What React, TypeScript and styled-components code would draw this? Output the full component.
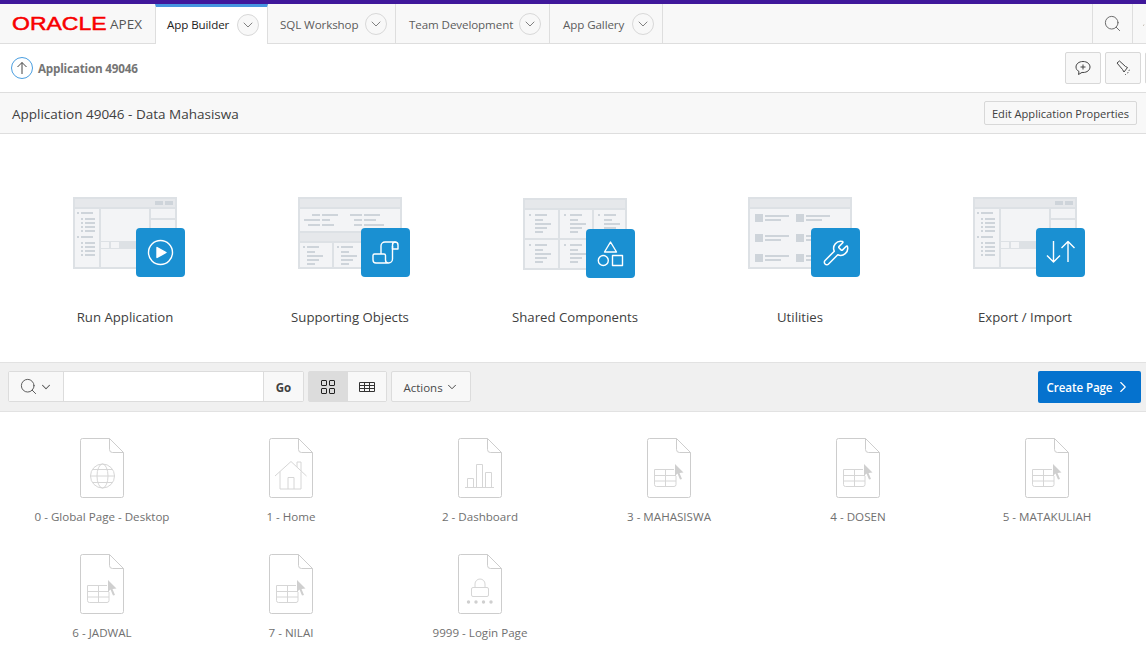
import React from "react";
import styled, { createGlobalStyle } from "styled-components";
import { ChevronDown, ChevronRight, Search, Wrench } from "lucide-react";

const GlobalStyle = createGlobalStyle`
  html, body {
    margin: 0;
    padding: 0;
    background: #fff;
    overflow: hidden;
  }
  * { box-sizing: border-box; }
`;

const Page = styled.div`
  width: 1146px;
  height: 654px;
  overflow: hidden;
  font-family: "Open Sans", "Noto Sans", sans-serif;
  color: #404040;
  border-top: 4px solid #40189b;
`;

const NavBar = styled.nav`
  height: 40px;
  display: flex;
  background: #f8f8f8;
  border-bottom: 1px solid #dedede;
`;

const Brand = styled.div`
  width: 155px;
  flex: none;
  display: flex;
  align-items: center;
  padding-left: 12px;
`;

const OracleMark = styled.span`
  display: inline-block;
  width: 94px;
  font-family: "Liberation Sans", sans-serif;
  font-size: 19px;
  line-height: 19px;
  font-weight: 400;
  color: #f80000;
  -webkit-text-stroke: 0.5px #f80000;
  transform: scaleX(1.21);
  transform-origin: left center;
`;

const ApexMark = styled.span`
  font-family: "Open Sans", sans-serif;
  font-size: 13.5px;
  margin-left: 4px;
  color: #555;
`;

const NavTab = styled.div<{ $active?: boolean; $width: number; $inset: number }>`
  width: ${p => p.$width}px;
  flex: none;
  height: ${p => (p.$active ? "40px" : "39px")};
  display: flex;
  align-items: center;
  justify-content: space-between;
  padding: ${p => (p.$active ? "0 8px 2px" : "1px 8px 0")};
  padding-left: ${p => p.$inset}px;
  font-size: 11.6px;
  letter-spacing: -0.1px;
  border-right: 1px solid #dedede;
  color: ${p => (p.$active ? "#222" : "#5c5c5c")};
  background: ${p => (p.$active ? "#fff" : "transparent")};
  border-left: ${p => (p.$active ? "1px solid #dedede" : "none")};
  border-top: ${p => (p.$active ? "3px solid #4696e0" : "none")};
`;

const TabCaret = styled.span`
  width: 22px;
  height: 22px;
  border-radius: 50%;
  border: 1px solid #d8d8d8;
  display: flex;
  align-items: center;
  justify-content: center;
  color: #777;
  background: #f8f8f8;
`;

const NavSpacer = styled.div`
  flex: 1;
`;

const NavTool = styled.div<{ $width: number }>`
  width: ${p => p.$width}px;
  flex: none;
  height: 39px;
  display: flex;
  align-items: center;
  padding-left: 10px;
  border-left: 1px solid #dedede;
  color: #666;
`;

const CrumbBar = styled.div`
  height: 49px;
  display: flex;
  align-items: center;
  padding: 0 0 0 11px;
  background: #fff;
  border-bottom: 1px solid #dedede;
`;

const UpButton = styled.span`
  width: 22px;
  height: 22px;
  flex: none;
  border-radius: 50%;
  border: 1px solid #4a9ee0;
  display: flex;
  align-items: center;
  justify-content: center;
  margin-right: 5px;
  color: #444;
`;

const CrumbText = styled.span`
  flex: 1;
  font-size: 11.7px;
  font-weight: 700;
  letter-spacing: -0.2px;
  color: #757575;
`;

const CrumbTool = styled.button`
  width: 36px;
  height: 32px;
  flex: none;
  margin-left: 4px;
  padding: 0;
  display: flex;
  align-items: center;
  justify-content: center;
  background: #f8f8f8;
  border: 1px solid #d8d8d8;
  border-radius: 2px;
  color: #444;
`;

const CrumbTools = styled.div`
  display: flex;
  margin-right: -35px;
`;

const TitleBar = styled.div`
  height: 41px;
  display: flex;
  align-items: center;
  justify-content: space-between;
  padding: 0 9px 0 12px;
  background: #f8f8f8;
  border-bottom: 1px solid #dedede;
`;

const PageTitle = styled.h1`
  margin: 1px 0 0;
  font-size: 13.5px;
  font-weight: 400;
  color: #404040;
`;

const PlainButton = styled.button`
  height: 24px;
  width: 153px;
  padding: 0;
  font-family: inherit;
  font-size: 11.1px;
  color: #404040;
  background: #f8f8f8;
  border: 1px solid #d8d8d8;
  border-radius: 2px;
  white-space: nowrap;
`;

const Launchers = styled.section`
  height: 229px;
  display: grid;
  grid-template-columns: repeat(5, 225px);
  padding: 63px 0 0 12.5px;
  background: #fff;
  border-bottom: 1px solid #e2e2e2;
`;

const Launcher = styled.div`
  display: flex;
  flex-direction: column;
  align-items: center;
`;

const Artwork = styled.div<{ $lower?: boolean }>`
  position: relative;
  width: 104px;
  height: 80px;
  padding-top: ${p => (p.$lower ? "1px" : "0")};
`;

const Badge = styled.span<{ $lower?: boolean }>`
  position: absolute;
  left: 63px;
  top: ${p => (p.$lower ? "32px" : "31px")};
  width: 49px;
  height: 49px;
  border-radius: 4px;
  background: #1a90d2;
  color: #fff;
  display: flex;
  align-items: center;
  justify-content: center;
`;

const LauncherLabel = styled.span`
  margin-top: 31px;
  font-size: 13.2px;
  line-height: 18px;
  color: #404040;
`;

const Toolbar = styled.div`
  height: 49px;
  display: flex;
  align-items: flex-start;
  padding: 8px 5px 0 8px;
  background: #f0f0f0;
  border-bottom: 1px solid #e2e2e2;
`;

const SearchGroup = styled.div`
  width: 296px;
  height: 31px;
  display: flex;
  background: #fff;
  border: 1px solid #dcdcdc;
  border-radius: 2px;
`;

const SearchMenu = styled.div`
  width: 55px;
  display: flex;
  align-items: center;
  justify-content: center;
  gap: 1px;
  background: #f8f8f8;
  border-right: 1px solid #dcdcdc;
  color: #555;
`;

const SearchInput = styled.div`
  flex: 1;
  background: #fff;
`;

const GoButton = styled.div`
  width: 40px;
  padding-top: 1px;
  display: flex;
  align-items: center;
  justify-content: center;
  background: #f8f8f8;
  border-left: 1px solid #dcdcdc;
  font-size: 11.5px;
  font-weight: 700;
  color: #404040;
`;

const ViewGroup = styled.div`
  width: 79px;
  height: 31px;
  margin-left: 4px;
  display: flex;
  border: 1px solid #dcdcdc;
  border-radius: 2px;
`;

const ViewButton = styled.div<{ $on?: boolean }>`
  flex: 1;
  display: flex;
  align-items: center;
  justify-content: center;
  background: ${p => (p.$on ? "#dcdcdc" : "#f8f8f8")};
  & + & {
    border-left: 1px solid #dcdcdc;
  }
`;

const ActionsButton = styled.div`
  width: 80px;
  height: 31px;
  padding-top: 1px;
  margin-left: 4px;
  display: flex;
  align-items: center;
  justify-content: center;
  gap: 2px;
  font-size: 11.5px;
  color: #4a4a4a;
  background: #f8f8f8;
  border: 1px solid #dcdcdc;
  border-radius: 2px;
`;

const CreateButton = styled.div`
  width: 103px;
  height: 32px;
  margin-left: auto;
  display: flex;
  align-items: center;
  justify-content: center;
  gap: 2px;
  font-size: 11.6px;
  font-weight: 600;
  letter-spacing: -0.1px;
  color: #fff;
  background: #0572ce;
  border-radius: 2px;
`;

const PageGrid = styled.div`
  display: grid;
  grid-template-columns: repeat(6, 189px);
  grid-auto-rows: 116px;
  padding: 26px 0 0 7.5px;
`;

const PageItem = styled.div`
  display: flex;
  flex-direction: column;
  align-items: center;
`;

const PageName = styled.span`
  margin-top: 10px;
  font-size: 11.6px;
  line-height: 18px;
  color: #707070;
  white-space: nowrap;
`;

const FRAME = "#dde1e5";
const PANEL = "#f3f4f6";
const HEAD = "#e6e8eb";
const INK = "#ced4da";

type Box = [number, number, number, number];

const Boxes = ({ items, fill }: { items: Box[]; fill: string }) => (
  <>
    {items.map(([x, y, w, h], i) => (
      <rect key={i} x={x} y={y} width={w} height={h} fill={fill} />
    ))}
  </>
);

const Sketch = ({ children }: { children: React.ReactNode }) => (
  <svg width="104" height="72" viewBox="0 0 104 72">
    <rect x="1" y="1" width="102" height="70" fill={PANEL} stroke={FRAME} strokeWidth="2" />
    <rect x="2" y="2" width="100" height="8" fill={HEAD} />
    <rect x="2" y="10" width="100" height="2" fill={FRAME} />
    {children}
  </svg>
);

const listLines: Box[] = [
  [8, 15, 12, 2],
  [8, 39, 12, 2],
  ...[21, 25, 29, 33, 45, 49, 53, 57].map((y): Box => [12, y, 10, 2]),
];
const listDots: Box[] = [
  [4, 15, 2, 2],
  [4, 39, 2, 2],
  ...[21, 25, 29, 33, 45, 49, 53, 57].map((y): Box => [8, y, 2, 2]),
];

const AppSketch = () => (
  <Sketch>
    <Boxes items={[[82, 4, 8, 4], [92, 4, 8, 4]]} fill={INK} />
    <Boxes items={[[26, 12, 2, 58], [76, 12, 2, 58], [78, 21, 24, 2], [28, 44, 48, 8]]} fill={FRAME} />
    <Boxes items={[[28, 45, 8, 6], [38, 45, 8, 6]]} fill={PANEL} />
    <Boxes items={listLines} fill={INK} />
    <Boxes items={listDots} fill={INK} />
  </Sketch>
);

const ObjectsSketch = () => (
  <Sketch>
    <Boxes items={[[2, 34, 100, 2], [2, 44, 100, 2], [34, 46, 2, 24], [68, 46, 2, 24]]} fill={FRAME} />
    <Boxes items={[[2, 36, 100, 8]]} fill={HEAD} />
    <Boxes
      items={[
        [14, 17, 8, 2], [24, 17, 16, 2], [6, 22, 16, 2], [24, 22, 8, 2], [10, 27, 12, 2], [24, 27, 12, 2],
        [52, 17, 12, 2], [66, 17, 16, 2], [56, 22, 8, 2], [66, 22, 12, 2], [56, 27, 8, 2], [66, 27, 20, 2],
        [5, 49, 2, 2], [9, 49, 12, 2], [9, 54, 8, 2], [9, 58, 16, 2], [9, 62, 12, 2], [9, 66, 8, 2],
        [39, 49, 2, 2], [43, 49, 12, 2], [43, 54, 8, 2], [43, 58, 16, 2], [43, 62, 12, 2], [43, 66, 8, 2],
      ]}
      fill={INK}
    />
  </Sketch>
);

const cellLines = (x: number, y: number): Box[] => [
  [x + 4, y + 4, 2, 2],
  [x + 10, y + 4, 12, 2],
  [x + 10, y + 9, 8, 2],
  [x + 10, y + 13, 16, 2],
  [x + 10, y + 17, 12, 2],
  [x + 10, y + 21, 8, 2],
];

const SharedSketch = () => (
  <Sketch>
    <Boxes items={[[35, 12, 2, 58], [69, 12, 2, 58], [2, 40, 100, 2]]} fill={FRAME} />
    <Boxes
      items={[...cellLines(2, 12), ...cellLines(37, 12), ...cellLines(71, 12), ...cellLines(2, 42), ...cellLines(37, 42)]}
      fill={INK}
    />
  </Sketch>
);

const UtilitiesSketch = () => (
  <Sketch>
    <Boxes
      items={[17, 37, 57].flatMap((y): Box[] => [
        [7, y, 8, 8],
        [48, y, 8, 8],
      ])}
      fill={INK}
    />
    <Boxes
      items={[17, 37, 57].flatMap((y): Box[] => [
        [17, y + 1, 24, 2],
        [17, y + 5, 16, 2],
        [58, y + 1, 24, 2],
        [58, y + 5, 16, 2],
      ])}
      fill={INK}
    />
  </Sketch>
);

const BadgeIcon = ({ children }: { children: React.ReactNode }) => (
  <svg width="49" height="49" viewBox="0 0 49 49" fill="none" stroke="#fff" strokeWidth="1.4" strokeLinejoin="round">
    {children}
  </svg>
);

const PlayIcon = () => (
  <BadgeIcon>
    <circle cx="24.5" cy="24.5" r="12" />
    <path d="M21 19.5 L30 24.5 L21 29.5 Z" fill="#fff" />
  </BadgeIcon>
);

const ScrollIcon = () => (
  <BadgeIcon>
    <path d="M20 26 V18 a4 4 0 0 1 4-4 H34 a3 3 0 0 1 3 3 V21 H31.5 V17 a3 3 0 0 1 3-3" />
    <path d="M31.5 18 V31 a4 4 0 0 1-4 4 H15 a3 3 0 0 1-3-3 v-4.5 a1.5 1.5 0 0 1 1.5-1.5 H23 a1.5 1.5 0 0 1 1.5 1.5 V32 a3 3 0 0 0 3 3" />
  </BadgeIcon>
);

const ShapesIcon = () => (
  <BadgeIcon>
    <path d="M24.5 13 L30.5 23 H18.5 Z" />
    <circle cx="17.3" cy="31.5" r="5" />
    <rect x="26.5" y="26.5" width="10" height="10" />
  </BadgeIcon>
);

const ArrowsIcon = () => (
  <BadgeIcon>
    <path d="M17.5 13 V34 M11 27.5 L17.5 34 L24 27.5" />
    <path d="M32 34 V13.5 M25.5 20 L32 13.5 L38.5 20" />
  </BadgeIcon>
);

const launchers = [
  { label: "Run Application", art: <AppSketch />, icon: <PlayIcon /> },
  { label: "Supporting Objects", art: <ObjectsSketch />, icon: <ScrollIcon /> },
  { label: "Shared Components", art: <SharedSketch />, icon: <ShapesIcon />, lower: true },
  { label: "Utilities", art: <UtilitiesSketch />, icon: <Wrench size={28} strokeWidth={1.3} /> },
  { label: "Export / Import", art: <AppSketch />, icon: <ArrowsIcon /> },
];

const GLYPH = "#d6d6d6";

const GlobeGlyph = () => (
  <g fill="none" stroke={GLYPH}>
    <circle cx="22.5" cy="38" r="12" />
    <ellipse cx="22.5" cy="38" rx="5.5" ry="12" />
    <path d="M10.5 38 H34.5 M12.5 31.5 H32.5 M12.5 44.5 H32.5" />
  </g>
);

const HomeGlyph = () => (
  <g fill="none" stroke={GLYPH}>
    <path d="M6 38 L22 23.5 L37.5 38" />
    <path d="M11 33.5 V51 H32 V33.5 M28 29 V24 H32 V33" />
    <path d="M19 51 V39.5 H25 V51" />
  </g>
);

const ChartGlyph = () => (
  <g fill="none" stroke={GLYPH}>
    <path d="M7 49.5 H36 M9.5 49.5 V40.5 H15.5 V49.5 M18.5 49.5 V26.5 H24.5 V49.5 M27.5 49.5 V34.5 H33.5 V49.5" />
  </g>
);

const TableGlyph = () => (
  <g>
    <path
      d="M27 31.5 H7.5 V46.5 a2 2 0 0 0 2 2 H27 a2 2 0 0 0 2-2 V38 M7.5 37.5 H29 M7.5 43 H29 M18.5 31.5 V48.5"
      fill="none"
      stroke={GLYPH}
    />
    <path d="M28 26 L36.5 34.5 L32.5 35 L35 41 L33 41.5 L30.5 35.5 L28 38 Z" fill="#cfcfcf" />
  </g>
);

const LockGlyph = () => (
  <g>
    <path d="M17 33 V30 a5 5 0 0 1 10 0 V33" fill="none" stroke={GLYPH} />
    <rect x="13.5" y="33.5" width="17" height="9" rx="1.5" fill="none" stroke={GLYPH} />
    {[10.5, 18, 25.5, 33].map(x => (
      <circle key={x} cx={x} cy="48" r="1.7" fill="#cfcfcf" />
    ))}
  </g>
);

const PageFile = ({ children }: { children: React.ReactNode }) => (
  <svg width="44" height="60" viewBox="0 0 44 60">
    <path
      d="M2.5 .5 H29.5 L43.5 14.5 V57.5 a2 2 0 0 1-2 2 H2.5 a2 2 0 0 1-2-2 V2.5 a2 2 0 0 1 2-2 Z M29.5 .5 V11.5 a3 3 0 0 0 3 3 H43.5"
      fill="#fff"
      stroke="#cdcdcd"
    />
    {children}
  </svg>
);

const pages = [
  { name: "0 - Global Page - Desktop", glyph: <GlobeGlyph /> },
  { name: "1 - Home", glyph: <HomeGlyph /> },
  { name: "2 - Dashboard", glyph: <ChartGlyph /> },
  { name: "3 - MAHASISWA", glyph: <TableGlyph /> },
  { name: "4 - DOSEN", glyph: <TableGlyph /> },
  { name: "5 - MATAKULIAH", glyph: <TableGlyph /> },
  { name: "6 - JADWAL", glyph: <TableGlyph /> },
  { name: "7 - NILAI", glyph: <TableGlyph /> },
  { name: "9999 - Login Page", glyph: <LockGlyph /> },
];

const tabs = [
  { name: "App Builder", width: 113, inset: 11, active: true },
  { name: "SQL Workshop", width: 128, inset: 12 },
  { name: "Team Development", width: 154, inset: 13 },
  { name: "App Gallery", width: 113, inset: 13 },
];

function App() {
  return (
    <Page>
      <GlobalStyle />
      <NavBar>
        <Brand>
          <OracleMark>ORACLE</OracleMark>
          <ApexMark>APEX</ApexMark>
        </Brand>
        {tabs.map(tab => (
          <NavTab key={tab.name} $active={tab.active} $width={tab.width} $inset={tab.inset}>
            {tab.name}
            <TabCaret>
              <ChevronDown size={16} strokeWidth={1.4} />
            </TabCaret>
          </NavTab>
        ))}
        <NavSpacer />
        <NavTool $width={40}>
          <Search size={19} strokeWidth={1.2} />
        </NavTool>
        <NavTool $width={14}>
          <svg width="6" height="14" viewBox="0 0 6 14" fill="none" stroke="#8a7a60">
            <path d="M0 11 L2 8" />
          </svg>
        </NavTool>
      </NavBar>

      <CrumbBar>
        <UpButton>
          <svg width="12" height="14" viewBox="0 0 12 14" fill="none" stroke="currentColor">
            <path d="M6 13 V1.5 M1.5 6 L6 1.5 L10.5 6" />
          </svg>
        </UpButton>
        <CrumbText>Application 49046</CrumbText>
        <CrumbTools>
          <CrumbTool>
            <svg width="18" height="18" viewBox="0 0 18 18" fill="none" stroke="currentColor">
              <path d="M9 2.5 C4.8 2.5 2 5 2 8 C2 10 3.2 11.6 5 12.5 L4.5 15.5 L8 13.4 C8.4 13.5 8.7 13.5 9 13.5 C13.2 13.5 16 11 16 8 C16 5 13.2 2.5 9 2.5 Z M9 5.5 V10.5 M6.5 8 H11.5" />
            </svg>
          </CrumbTool>
          <CrumbTool>
            <svg width="18" height="18" viewBox="0 0 18 18" fill="none" stroke="currentColor">
              <path d="M3 4 L5.5 2 L11.5 7.5 L13.5 8.5 L10 13 L8.5 10.5 Z" strokeLinejoin="round" />
              <path d="M14.5 11.5 L16 11 M13 14 L14.5 13.5 M11 16 L12 15" stroke="#777" />
            </svg>
          </CrumbTool>
          <CrumbTool />
        </CrumbTools>
      </CrumbBar>

      <TitleBar>
        <PageTitle>Application 49046 - Data Mahasiswa</PageTitle>
        <PlainButton>Edit Application Properties</PlainButton>
      </TitleBar>

      <Launchers>
        {launchers.map(item => (
          <Launcher key={item.label}>
            <Artwork $lower={item.lower}>
              {item.art}
              <Badge $lower={item.lower}>{item.icon}</Badge>
            </Artwork>
            <LauncherLabel>{item.label}</LauncherLabel>
          </Launcher>
        ))}
      </Launchers>

      <Toolbar>
        <SearchGroup>
          <SearchMenu>
            <Search size={19} strokeWidth={1.2} />
            <ChevronDown size={14} strokeWidth={1.8} />
          </SearchMenu>
          <SearchInput />
          <GoButton>Go</GoButton>
        </SearchGroup>
        <ViewGroup>
          <ViewButton $on>
            <svg width="16" height="16" viewBox="0 0 16 16" fill="none" stroke="#222">
              <rect x="1.5" y="1.5" width="5" height="5" rx="0.5" />
              <rect x="9.5" y="1.5" width="5" height="5" rx="0.5" />
              <rect x="1.5" y="9.5" width="5" height="5" rx="0.5" />
              <rect x="9.5" y="9.5" width="5" height="5" rx="0.5" />
            </svg>
          </ViewButton>
          <ViewButton>
            <svg width="16" height="12" viewBox="0 0 16 12" fill="none" stroke="#333">
              <path d="M.5 1.5 H15.5 V10.5 H.5 Z M.5 4.5 H15.5 M.5 7.5 H15.5 M5.5 1.5 V10.5 M10.5 1.5 V10.5" />
            </svg>
          </ViewButton>
        </ViewGroup>
        <ActionsButton>
          Actions
          <ChevronDown size={14} strokeWidth={1.7} />
        </ActionsButton>
        <CreateButton>
          Create Page
          <ChevronRight size={18} strokeWidth={1.5} />
        </CreateButton>
      </Toolbar>

      <PageGrid>
        {pages.map(page => (
          <PageItem key={page.name}>
            <PageFile>{page.glyph}</PageFile>
            <PageName>{page.name}</PageName>
          </PageItem>
        ))}
      </PageGrid>
    </Page>
  );
}

export default App;
